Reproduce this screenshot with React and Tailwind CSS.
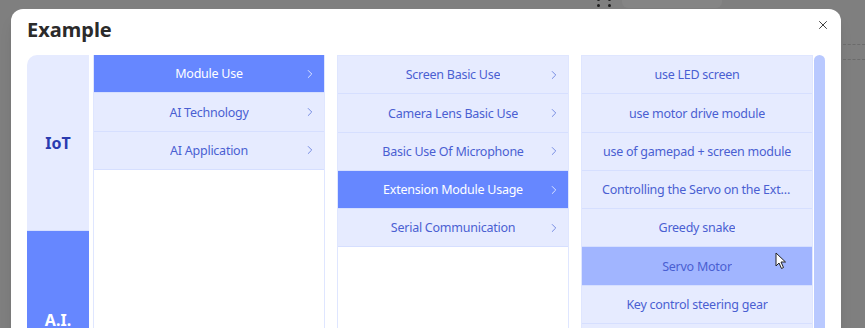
import { X, ChevronRight } from "lucide-react";

const groups = ["Module Use", "AI Technology", "AI Application"];
const topics = [
  "Screen Basic Use",
  "Camera Lens Basic Use",
  "Basic Use Of Microphone",
  "Extension Module Usage",
  "Serial Communication",
];
const lessons = [
  "use LED screen",
  "use motor drive module",
  "use of gamepad + screen module",
  "Controlling the Servo on the Extension Board",
  "Greedy snake",
  "Servo Motor",
  "Key control steering gear",
  "Ultrasonic ranging",
];

function Row({ label, active, hover, arrow }) {
  let tone = "bg-[#e6ebff] text-[#4a5fd2]";
  if (active) tone = "bg-[#6687ff] text-white";
  if (hover) tone = "bg-[#a1b5ff] text-[#4a5fd2]";
  return (
    <div
      className={`relative flex h-[38.3px] shrink-0 items-center justify-center border-b border-[#d6dfff] px-[20px] pt-[2px] text-[12.5px] tracking-[-0.25px] ${tone}`}
    >
      <span className="truncate">{label}</span>
      {arrow && (
        <ChevronRight
          size={14}
          strokeWidth={1.6}
          className={`absolute right-[7px] top-1/2 -translate-y-1/2 ${active ? "text-[#e3e9ff]" : "text-[#6f85e0]"}`}
        />
      )}
    </div>
  );
}

function Column({ items, active, hover, arrow, top }) {
  return (
    <div className={`flex w-[232px] flex-col border-x border-[#dfe6ff] ${top ? "border-t" : ""}`}>
      {items.map((it, i) => (
        <Row key={it} label={it} active={i === active} hover={i === hover} arrow={arrow} />
      ))}
    </div>
  );
}

export default function App() {
  return (
    <div
      className="relative h-[328px] w-[865px] overflow-hidden bg-[#7f7f7f]"
      style={{ fontFamily: '"Noto Sans", "Open Sans", Arial, sans-serif' }}
    >
      {/* things behind the overlay */}
      <div className="absolute left-[597px] top-[-2px] grid grid-cols-2 gap-x-[8px] gap-y-[3px]">
        <span className="h-[3px] w-[3px] rounded-full bg-[#1f1f1f]" />
        <span className="h-[3px] w-[3px] rounded-full bg-[#1f1f1f]" />
        <span className="h-[3px] w-[3px] rounded-full bg-[#1f1f1f]" />
        <span className="h-[3px] w-[3px] rounded-full bg-[#1f1f1f]" />
      </div>
      <div className="absolute left-[622px] top-[-10px] h-[18px] w-[100px] rounded-md bg-[#858585]" />
      <div className="absolute right-0 top-[44px] w-[22px] border-t border-dashed border-[#6b6b6b]" />
      <div className="absolute right-0 top-[59px] w-[22px] border-t border-dashed border-[#6b6b6b]" />

      <div className="pl-[11px] pt-[9px]">
        <div className="h-[340px] w-[830px] rounded-[12px] bg-white px-[16px] shadow-lg">
          <div className="flex h-[46px] items-center justify-between">
            <h1 className="mt-[-5px] text-[20px] font-bold text-[#2b2b2b]">Example</h1>
            <X size={14} strokeWidth={1.6} className="mr-[-5px] mt-[-14px] text-[#333]" />
          </div>

          <div className="flex">
            <div className="flex w-[63px] flex-col overflow-hidden rounded-tl-[10px]">
              <div className="flex h-[176px] items-center justify-center border-b border-[#d6dfff] bg-[#e6ebff] text-[16px] font-bold text-[#2a3bb0]">
                IoT
              </div>
              <div className="flex h-[178px] items-center justify-center bg-[#6687ff] text-[16px] font-bold text-white">
                A.I.
              </div>
            </div>

            <div className="ml-[4px] flex gap-[12px]">
              <Column items={groups} active={0} arrow />
              <Column items={topics} active={3} arrow top />
              <div className="flex">
                <Column items={lessons} hover={5} top />
                <div className="ml-[1px] w-[11px] rounded-t-[6px] bg-[#b9c9ff]" />
              </div>
            </div>
          </div>
        </div>
      </div>

      {/* mouse pointer */}
      <svg className="absolute left-[775px] top-[252px]" width="12" height="18" viewBox="0 0 12 18">
        <path d="M1 1 L1 14 L4 11 L6.5 16.5 L8.5 15.5 L6 10 L10.5 10 Z" fill="#fff" stroke="#222" strokeWidth="1" strokeLinejoin="round" />
      </svg>
    </div>
  );
}
